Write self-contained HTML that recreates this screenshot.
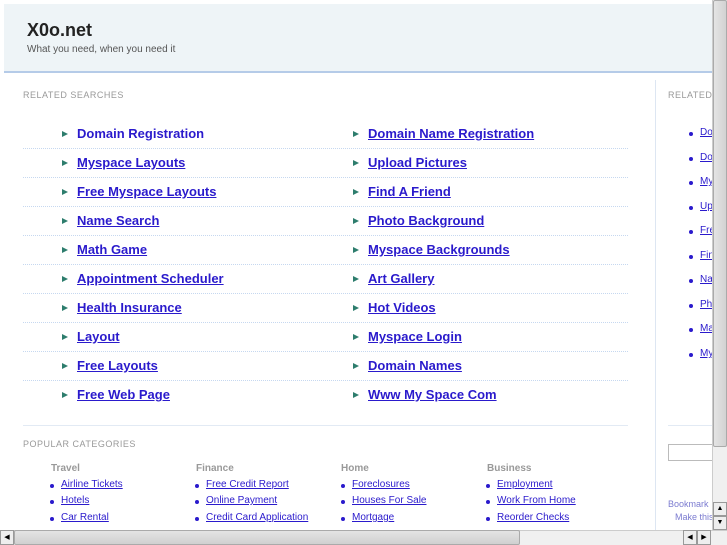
<!DOCTYPE html>
<html><head><meta charset="utf-8"><style>
*{margin:0;padding:0;box-sizing:border-box}
body{width:727px;height:545px;overflow:hidden;background:#fff;font-family:"Liberation Sans",Arial,sans-serif;position:relative}
.a{position:absolute;white-space:nowrap}
#hdr{left:4px;top:4px;width:708px;height:69px;background:#eef4f7;border-bottom:2px solid #b5cbe8}
.t{font-size:18px;font-weight:bold;color:#222;left:27px;top:20px}
.s{font-size:10px;color:#555;left:27px;top:44px}
.lab{font-size:9px;color:#999;letter-spacing:.5px}
.lk{font-size:13px;font-weight:bold;color:#2a1acc;text-decoration:underline;margin-top:1px}
.ar{width:0;height:0;border-left:6px solid #2d7d6d;border-top:3px solid transparent;border-bottom:3px solid transparent;margin-top:1px}
.dl{height:0;border-top:1px dotted #c6d8f0;width:605px;left:23px}
.ch{font-size:10px;font-weight:bold;color:#999}
.sl{font-size:10px;color:#2a1acc;text-decoration:underline}
.b{width:4px;height:4px;border-radius:2px;background:#2a1acc}
</style></head><body>
<div class="a" id="hdr"></div>
<div class="a t">X0o.net</div>
<div class="a s">What you need, when you need it</div>
<div class="a lab" style="left:23px;top:90px">RELATED SEARCHES</div>
<div class="a" style="left:655px;top:80px;width:1px;height:450px;background:#dde6f2"></div>
<div class="a lab" style="left:668px;top:90px">RELATED</div>

<div class="a ar" style="left:62px;top:130px"></div><div class="a lk" style="left:77px;top:125px;text-decoration:none">Domain Registration</div>
<div class="a ar" style="left:353px;top:130px"></div><div class="a lk" style="left:368px;top:125px">Domain Name Registration</div>
<div class="a dl" style="top:148px"></div>
<div class="a ar" style="left:62px;top:159px"></div><div class="a lk" style="left:77px;top:154px">Myspace Layouts</div>
<div class="a ar" style="left:353px;top:159px"></div><div class="a lk" style="left:368px;top:154px">Upload Pictures</div>
<div class="a dl" style="top:177px"></div>
<div class="a ar" style="left:62px;top:188px"></div><div class="a lk" style="left:77px;top:183px">Free Myspace Layouts</div>
<div class="a ar" style="left:353px;top:188px"></div><div class="a lk" style="left:368px;top:183px">Find A Friend</div>
<div class="a dl" style="top:206px"></div>
<div class="a ar" style="left:62px;top:217px"></div><div class="a lk" style="left:77px;top:212px">Name Search</div>
<div class="a ar" style="left:353px;top:217px"></div><div class="a lk" style="left:368px;top:212px">Photo Background</div>
<div class="a dl" style="top:235px"></div>
<div class="a ar" style="left:62px;top:246px"></div><div class="a lk" style="left:77px;top:241px">Math Game</div>
<div class="a ar" style="left:353px;top:246px"></div><div class="a lk" style="left:368px;top:241px">Myspace Backgrounds</div>
<div class="a dl" style="top:264px"></div>
<div class="a ar" style="left:62px;top:275px"></div><div class="a lk" style="left:77px;top:270px">Appointment Scheduler</div>
<div class="a ar" style="left:353px;top:275px"></div><div class="a lk" style="left:368px;top:270px">Art Gallery</div>
<div class="a dl" style="top:293px"></div>
<div class="a ar" style="left:62px;top:304px"></div><div class="a lk" style="left:77px;top:299px">Health Insurance</div>
<div class="a ar" style="left:353px;top:304px"></div><div class="a lk" style="left:368px;top:299px">Hot Videos</div>
<div class="a dl" style="top:322px"></div>
<div class="a ar" style="left:62px;top:333px"></div><div class="a lk" style="left:77px;top:328px">Layout</div>
<div class="a ar" style="left:353px;top:333px"></div><div class="a lk" style="left:368px;top:328px">Myspace Login</div>
<div class="a dl" style="top:351px"></div>
<div class="a ar" style="left:62px;top:362px"></div><div class="a lk" style="left:77px;top:357px">Free Layouts</div>
<div class="a ar" style="left:353px;top:362px"></div><div class="a lk" style="left:368px;top:357px">Domain Names</div>
<div class="a dl" style="top:380px"></div>
<div class="a ar" style="left:62px;top:391px"></div><div class="a lk" style="left:77px;top:386px">Free Web Page</div>
<div class="a ar" style="left:353px;top:391px"></div><div class="a lk" style="left:368px;top:386px">Www My Space Com</div>
<div class="a" style="left:23px;top:425px;width:605px;border-top:1px solid #e2eaf4"></div>
<div class="a" style="left:668px;top:425px;width:44px;border-top:1px solid #e2eaf4"></div>

<div class="a b" style="left:689px;top:132px"></div><div class="a sl" style="left:700px;top:127px">Do</div>
<div class="a b" style="left:689px;top:157px"></div><div class="a sl" style="left:700px;top:152px">Do</div>
<div class="a b" style="left:689px;top:181px"></div><div class="a sl" style="left:700px;top:176px">My</div>
<div class="a b" style="left:689px;top:206px"></div><div class="a sl" style="left:700px;top:201px">Up</div>
<div class="a b" style="left:689px;top:230px"></div><div class="a sl" style="left:700px;top:225px">Fre</div>
<div class="a b" style="left:689px;top:255px"></div><div class="a sl" style="left:700px;top:250px">Fin</div>
<div class="a b" style="left:689px;top:279px"></div><div class="a sl" style="left:700px;top:274px">Na</div>
<div class="a b" style="left:689px;top:304px"></div><div class="a sl" style="left:700px;top:299px">Ph</div>
<div class="a b" style="left:689px;top:328px"></div><div class="a sl" style="left:700px;top:323px">Ma</div>
<div class="a b" style="left:689px;top:353px"></div><div class="a sl" style="left:700px;top:348px">My</div>
<div class="a" style="left:668px;top:444px;width:50px;height:17px;border:1px solid #bbb;background:#fff"></div>
<div class="a" style="left:668px;top:499px;font-size:9px;color:#7b7bd0">Bookmark</div>
<div class="a" style="left:675px;top:512px;font-size:9px;color:#7b7bd0">Make this</div>

<div class="a lab" style="left:23px;top:439px">POPULAR CATEGORIES</div>
<div class="a ch" style="left:51px;top:463px">Travel</div>
<div class="a b" style="left:50px;top:484px"></div><div class="a sl" style="left:61px;top:479px">Airline Tickets</div>
<div class="a b" style="left:50px;top:500px"></div><div class="a sl" style="left:61px;top:495px">Hotels</div>
<div class="a b" style="left:50px;top:517px"></div><div class="a sl" style="left:61px;top:512px">Car Rental</div>
<div class="a ch" style="left:196px;top:463px">Finance</div>
<div class="a b" style="left:195px;top:484px"></div><div class="a sl" style="left:206px;top:479px">Free Credit Report</div>
<div class="a b" style="left:195px;top:500px"></div><div class="a sl" style="left:206px;top:495px">Online Payment</div>
<div class="a b" style="left:195px;top:517px"></div><div class="a sl" style="left:206px;top:512px">Credit Card Application</div>
<div class="a ch" style="left:341px;top:463px">Home</div>
<div class="a b" style="left:341px;top:484px"></div><div class="a sl" style="left:352px;top:479px">Foreclosures</div>
<div class="a b" style="left:341px;top:500px"></div><div class="a sl" style="left:352px;top:495px">Houses For Sale</div>
<div class="a b" style="left:341px;top:517px"></div><div class="a sl" style="left:352px;top:512px">Mortgage</div>
<div class="a ch" style="left:487px;top:463px">Business</div>
<div class="a b" style="left:486px;top:484px"></div><div class="a sl" style="left:497px;top:479px">Employment</div>
<div class="a b" style="left:486px;top:500px"></div><div class="a sl" style="left:497px;top:495px">Work From Home</div>
<div class="a b" style="left:486px;top:517px"></div><div class="a sl" style="left:497px;top:512px">Reorder Checks</div>

<div class="a" style="left:712px;top:0;width:15px;height:530px;background:#f0f0f0;border-left:1px solid #ccc"></div>
<div class="a" style="left:713px;top:0;width:14px;height:447px;background:linear-gradient(90deg,#e4e4e4,#d2d2d2);border:1px solid #aaa;border-radius:2px"></div>
<div class="a" style="left:713px;top:502px;width:14px;height:14px;background:#eee;border:1px solid #999;font-size:7px;text-align:center;line-height:12px">▲</div>
<div class="a" style="left:713px;top:516px;width:14px;height:14px;background:#eee;border:1px solid #999;font-size:7px;text-align:center;line-height:12px">▼</div>
<div class="a" style="left:0;top:530px;width:727px;height:15px;background:#f0f0f0;border-top:1px solid #ccc"></div>
<div class="a" style="left:0;top:530px;width:14px;height:15px;background:#eee;border:1px solid #999;font-size:7px;text-align:center;line-height:13px">◀</div>
<div class="a" style="left:14px;top:530px;width:506px;height:15px;background:linear-gradient(#e4e4e4,#d0d0d0);border:1px solid #aaa;border-radius:2px"></div>
<div class="a" style="left:683px;top:530px;width:14px;height:15px;background:#eee;border:1px solid #999;font-size:7px;text-align:center;line-height:13px">◀</div>
<div class="a" style="left:697px;top:530px;width:14px;height:15px;background:#eee;border:1px solid #999;font-size:7px;text-align:center;line-height:13px">▶</div>
</body></html>
